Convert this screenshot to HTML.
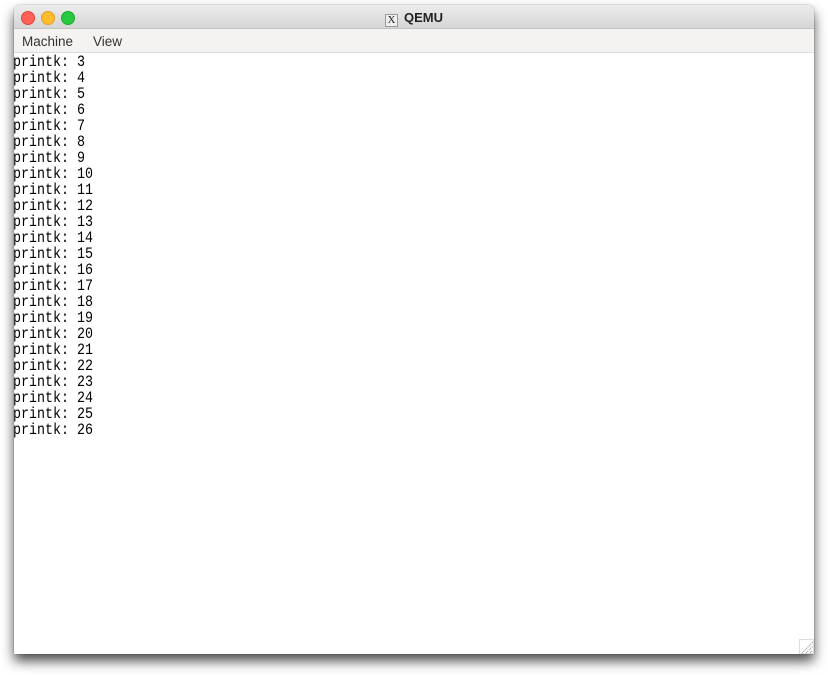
<!DOCTYPE html>
<html><head><style>
html,body{margin:0;padding:0;width:828px;height:675px;background:#fff;overflow:hidden}
.win{position:absolute;left:14px;top:5px;width:800px;height:649px;background:#fff;border-radius:6px 6px 0 0;box-shadow:0 7px 12px rgba(0,0,0,0.7),0 0 1px rgba(0,0,0,0.5);overflow:hidden}
.title{position:absolute;left:0;top:0;width:800px;height:23px;background:linear-gradient(#ececec,#d6d6d6);border-bottom:1px solid #c4c4c4}
.dot{position:absolute;top:6px;width:12px;height:12px;border-radius:50%}
.tt{position:absolute;left:0;right:0;top:5px;text-align:center;font:bold 13px "Liberation Sans",sans-serif;color:#222}
.xi{display:inline-block;width:11px;height:11px;border:1px solid #999;background:#eee;font:11px "Liberation Serif",serif;line-height:11px;vertical-align:-1px;margin-right:6px;text-align:center}
.menu{position:absolute;left:0;top:24px;width:800px;height:23px;background:#f4f3f2;border-bottom:1px solid #ddd;font:13.5px "Liberation Sans",sans-serif;color:#333}
.menu span{position:absolute;top:5px}
.con{position:absolute;left:-1px;top:49px;font:16px "Liberation Mono",monospace;line-height:16px;color:#000;white-space:pre;transform:scaleX(0.833);transform-origin:0 0}
</style></head><body>
<div class="win">
<div class="title">
<div class="dot" style="left:7px;background:#fe5f57;border:0.5px solid #e0443e"></div>
<div class="dot" style="left:27px;background:#febc2e;border:0.5px solid #dea123"></div>
<div class="dot" style="left:47px;background:#28c840;border:0.5px solid #1aab29"></div>
<div class="tt"><span class="xi">X</span>QEMU</div>
</div>
<div class="menu"><span style="left:8px">Machine</span><span style="left:79px">View</span></div>
<div class="con">printk: 3
printk: 4
printk: 5
printk: 6
printk: 7
printk: 8
printk: 9
printk: 10
printk: 11
printk: 12
printk: 13
printk: 14
printk: 15
printk: 16
printk: 17
printk: 18
printk: 19
printk: 20
printk: 21
printk: 22
printk: 23
printk: 24
printk: 25
printk: 26</div>
<svg style="position:absolute;left:785px;top:634px" width="15" height="15"><rect x="0.5" y="0.5" width="14" height="14" fill="#fff" stroke="#ddd"/><path d="M3 14L14 3M7 14L14 7M11 14L14 11" stroke="#888" stroke-width="1" stroke-dasharray="1 1"/></svg>
</div>
</body></html>
